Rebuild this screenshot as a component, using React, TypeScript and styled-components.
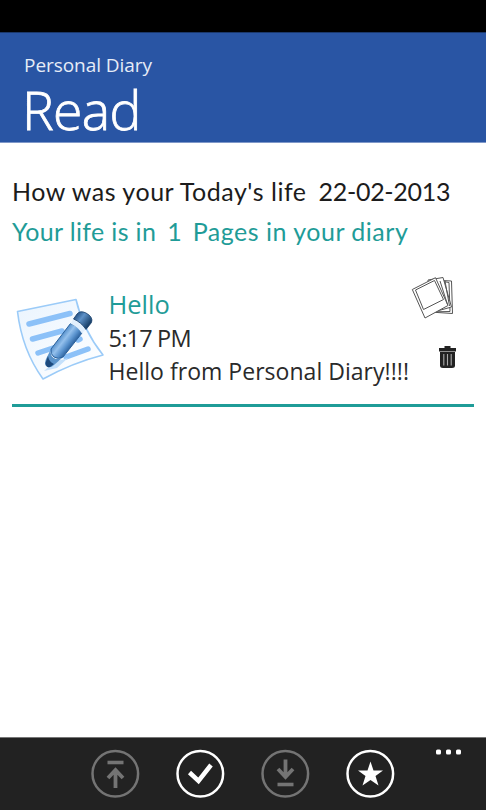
import React from 'react';
import styled, { createGlobalStyle } from 'styled-components';

const Global = createGlobalStyle`
  * { box-sizing: border-box; }
  html, body { margin: 0; padding: 0; background: #fff; }
`;

const Phone = styled.div`
  width: 486px;
  height: 810px;
  display: flex;
  flex-direction: column;
  overflow: hidden;
  background: #fff;
  font-family: 'Open Sans', 'Noto Sans', sans-serif;
`;

const StatusBar = styled.div`
  height: 32px;
  flex: none;
  background: #000;
`;

const Header = styled.header`
  height: 111px;
  flex: none;
  padding: 20px 0 0 24px;
  background: #2955a4;
  border-top: 1px solid #1b386b;
  border-bottom: 1px solid #7f98c9;
  color: #fff;
`;

const AppName = styled.div`
  height: 24px;
  font-size: 19px;
  line-height: 24px;
  letter-spacing: -0.05px;
  color: #e6ecf7;
`;

const PageTitle = styled.h1`
  margin: 2px 0 0 -2px;
  height: 62px;
  font-size: 53.5px;
  font-weight: 300;
  line-height: 62px;
  letter-spacing: -0.7px;
  -webkit-text-stroke: 0.8px #fff;
`;

const Main = styled.main`
  flex: 1;
  padding: 28px 12px 0;
`;

const Summary = styled.div<{ $accent?: boolean; $gap: number }>`
  display: flex;
  gap: ${(p) => p.$gap}px;
  height: 40px;
  font-family: Lato, 'Open Sans', sans-serif;
  font-size: 25px;
  line-height: 40px;
  white-space: nowrap;
  color: ${(p) => (p.$accent ? '#1f9c98' : '#1c1c1c')};
`;

const Phrase = styled.span<{ $spacing: number }>`
  letter-spacing: ${(p) => p.$spacing}px;
`;

const Entry = styled.article`
  display: flex;
  height: 156px;
  padding-top: 26px;
  border-bottom: 3px solid #1f9c98;
`;

const NoteSlot = styled.div`
  width: 96px;
  flex: none;
  padding: 20px 0 0 3px;
`;

const EntryText = styled.div`
  flex: 1;
  padding: 10px 0 0 0.5px;
  white-space: nowrap;
`;

const EntryLine = styled.div<{ $size: number; $height: number; $spacing: number; $accent?: boolean }>`
  height: ${(p) => p.$height}px;
  font-size: ${(p) => p.$size}px;
  line-height: ${(p) => p.$height}px;
  letter-spacing: ${(p) => p.$spacing}px;
  color: ${(p) => (p.$accent ? '#1f9c98' : '#2a2a2a')};
`;

const EntryActions = styled.div`
  display: flex;
  flex: none;
  flex-direction: column;
  align-items: flex-end;
  gap: 26px;
  width: 62px;
  padding-right: 18px;
`;

const IconButton = styled.button<{ $inset?: number }>`
  display: block;
  margin-right: ${(p) => p.$inset ?? 0}px;
  padding: 0;
  border: 0;
  background: none;
  line-height: 0;
`;

const AppBar = styled.footer`
  display: flex;
  flex: none;
  align-items: flex-start;
  gap: 35px;
  height: 73px;
  padding: 11px 0 0 90px;
  background: #222;
  border-top: 1px solid #777;
`;

const MoreButton = styled(IconButton)`
  margin-left: 5px;
`;

const NoteIcon = () => (
  <svg width="90" height="84" viewBox="15 297 90 84">
    <defs>
      <linearGradient id="paper" x1="0" y1="0" x2="1" y2="1">
        <stop offset="0" stopColor="#eaf4fe" />
        <stop offset="1" stopColor="#ffffff" />
      </linearGradient>
      <linearGradient id="pen" gradientUnits="userSpaceOnUse" x1="60" y1="336" x2="73" y2="346">
        <stop offset="0" stopColor="#4f8bc8" />
        <stop offset="0.35" stopColor="#94c0ec" />
        <stop offset="0.65" stopColor="#5c95d0" />
        <stop offset="1" stopColor="#255a96" />
      </linearGradient>
      <linearGradient id="cap" gradientUnits="userSpaceOnUse" x1="75" y1="315" x2="89" y2="326">
        <stop offset="0" stopColor="#1d4a7d" />
        <stop offset="0.4" stopColor="#5f92c8" />
        <stop offset="1" stopColor="#123860" />
      </linearGradient>
    </defs>
    <path d="M17.500 311.500L76 299.500Q83 330 103 355Q72 363 43 379Q22 350 17.500 311.500Z" fill="url(#paper)" stroke="#9bcbf8" strokeWidth="1.600" strokeLinejoin="round" />
    <g stroke="#8cc1f8" strokeWidth="5.500" strokeLinecap="round" fill="none">
      <path d="M29 324L70 313.500" />
      <path d="M32.500 339L62 331" />
      <path d="M38 353L56 347M66 357L88 349M78 340L80 339" />
    </g>
    <path d="M44 371L54 362L68 358L57 368Z" fill="#c4e0fb" />
    <path d="M51 349L70.500 323.500Q78 326 82 333L63 357Q59 360 54 357Q50 354 51 349Z" fill="url(#pen)" stroke="#2a619c" strokeWidth="1" />
    <path d="M50.500 350Q50 357 56 359L62 358L54 365Q50 369 46 366Q44 364 46 359Z" fill="#5b93ca" />
    <path d="M48 356L45.500 363Q46 368 50 367L54 364Q49 362 48 356Z" fill="#1d4a7d" />
    <path d="M70.500 323.500L73.500 319Q81 322 85.500 329.500L82 333.500Q78 327 70.500 323.500Z" fill="#e1effd" />
    <path d="M73.500 319L77 314Q80 310 86 313Q93.500 317 91.500 322.500L86 329.500Q81 322 73.500 319Z" fill="url(#cap)" stroke="#163d69" strokeWidth="0.800" />
  </svg>
);

const PhotosIcon = () => (
  <svg width="43" height="42" viewBox="411 277 43 42">
    <g fill="#fff" stroke="#555" strokeWidth="1" strokeLinejoin="round">
      <path d="M432 280L451.500 281L452.500 313.500L430 312Z" />
      <path d="M432 279.500L449 282.500L450 311.500L426 312Z" />
      <path d="M428 280L443 277.500L451.500 307L430 313Z" />
      <path d="M412.300 289.500L435.500 277.700L448 305.500L425 318Z" />
      <path d="M415.500 290L434.500 280.500L443.500 299.500L423.500 309.500Z" />
      <path d="M440 281L447.500 304.500M445 281L449.500 306" fill="none" />
    </g>
  </svg>
);

const TrashIcon = () => (
  <svg width="18" height="24" viewBox="438 345 18 24">
    <path d="M444.500 348V346H450.500V348H456V351.500H439V348Z" fill="#222" />
    <path d="M440 352H455V365.500Q455 368 452 368H443Q440 368 440 365.500Z" fill="#222" />
    <path d="M443.800 354V365.500M447.500 354V365.500M451.200 354V365.500" stroke="#aaa" strokeWidth="1.100" />
  </svg>
);

interface BarIconProps {
  color: string;
  children: React.ReactNode;
}

const BarIcon = ({ color, children }: BarIconProps) => (
  <svg width="50" height="50" viewBox="0 0 50 50" fill="none" stroke={color}>
    <circle cx="25.300" cy="24.700" r="22.800" strokeWidth="2.500" />
    {children}
  </svg>
);

export default function App() {
  return (
    <>
      <Global />
      <Phone>
        <StatusBar />
        <Header>
          <AppName>Personal Diary</AppName>
          <PageTitle>Read</PageTitle>
        </Header>
        <Main>
          <Summary $gap={12}>
            <Phrase $spacing={0.52}>How was your Today's life</Phrase>
            <Phrase $spacing={-0.3}>22-02-2013</Phrase>
          </Summary>
          <Summary $accent $gap={11}>
            <Phrase $spacing={0.35}>Your life is in</Phrase>
            <Phrase $spacing={0}>1</Phrase>
            <Phrase $spacing={0.5}>Pages in your diary</Phrase>
          </Summary>
          <Entry>
            <NoteSlot>
              <NoteIcon />
            </NoteSlot>
            <EntryText>
              <EntryLine $accent $size={25.5} $height={35} $spacing={0}>Hello</EntryLine>
              <EntryLine $size={23.5} $height={32.5} $spacing={-0.8}>5:17 PM</EntryLine>
              <EntryLine $size={23} $height={33} $spacing={0.03}>Hello from Personal Diary!!!!</EntryLine>
            </EntryText>
            <EntryActions>
              <IconButton aria-label="Photos" $inset={2}>
                <PhotosIcon />
              </IconButton>
              <IconButton aria-label="Delete">
                <TrashIcon />
              </IconButton>
            </EntryActions>
          </Entry>
        </Main>
        <AppBar>
          <IconButton aria-label="Previous">
            <BarIcon color="#747474">
              <path d="M17.500 13.500H33.500" strokeWidth="3.600" />
              <path d="M25.500 39V21M18 29L25.500 21L33 29" strokeWidth="3.800" />
            </BarIcon>
          </IconButton>
          <IconButton aria-label="Done">
            <BarIcon color="#fff">
              <path d="M14.500 23.500L23.500 32L36 16" strokeWidth="4.500" />
            </BarIcon>
          </IconButton>
          <IconButton aria-label="Next">
            <BarIcon color="#747474">
              <path d="M25.500 10.500V28M18 20L25.500 28L33 20" strokeWidth="3.800" />
              <path d="M17.500 35.500H33.500" strokeWidth="3.600" />
            </BarIcon>
          </IconButton>
          <IconButton aria-label="Favorite">
            <BarIcon color="#fff">
              <path d="M25.500 12.500L28.500 21.500H38L30.500 27L33.500 36.500L25.500 31L17.500 36.500L20.500 27L13 21.500H22.500Z" fill="#fff" stroke="none" />
            </BarIcon>
          </IconButton>
          <MoreButton aria-label="More">
            <svg width="28" height="6" viewBox="0 0 28 6" fill="#fff">
              <rect x="1" y="0.500" width="5" height="5" rx="1.500" />
              <rect x="11" y="0.500" width="5" height="5" rx="1.500" />
              <rect x="21" y="0.500" width="5" height="5" rx="1.500" />
            </svg>
          </MoreButton>
        </AppBar>
      </Phone>
    </>
  );
}
